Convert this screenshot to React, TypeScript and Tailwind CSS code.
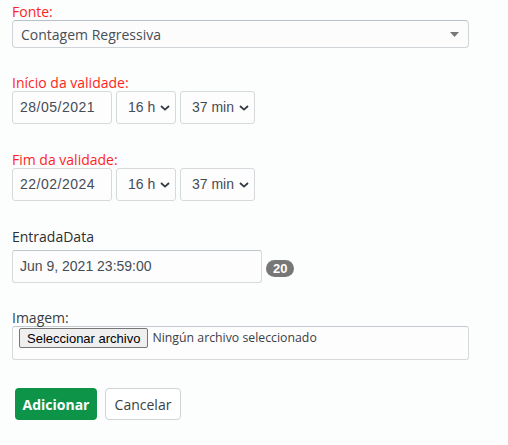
import React from "react";

const label = "block text-[14px] leading-[16px] text-[#ff1f1f] font-['Open_Sans',sans-serif]";
const box =
  "flex items-center h-[33px] border border-[#d6dadd] rounded-[3px] bg-[#fdfdfe] text-[14px] text-[#454c55] font-['Liberation_Sans',sans-serif]";

const Chevron = () => (
  <svg width="10" height="6" viewBox="0 0 10 6" className="ml-auto">
    <path d="M1 1 L5 4.6 L9 1" fill="none" stroke="#333a42" strokeWidth="1.8" />
  </svg>
);

const DateRow = ({ date }: { date: string }) => (
  <div className="flex gap-[4px]">
    <div className={`${box} w-[100px] pl-[7px] tracking-[0.5px]`}>{date}</div>
    <div className={`${box} w-[60px] pl-[11px] pr-[5px]`}>
      16 h
      <Chevron />
    </div>
    <div className={`${box} w-[75px] pl-[11px] pr-[5px]`}>
      37 min
      <Chevron />
    </div>
  </div>
);

const App = () => {
  return (
    <div className="w-[508px] h-[445px] bg-[#fcfdfd] pl-[12px] pt-[4px] font-['Open_Sans',sans-serif]">
      <label className={label}>Fonte:</label>
      <div className="w-[457px] h-[28px] flex items-center px-[8px] border border-[#cfd4d8] border-t-[#b9c1c6] rounded-[4px] bg-[#fdfcfd] text-[14px] text-[#474e57] font-['Open_Sans',sans-serif]">
        Contagem Regressiva
        <svg width="9" height="5" viewBox="0 0 9 5" className="ml-auto mr-[1px]">
          <path d="M0 0 H9 L4.5 5 Z" fill="#777" />
        </svg>
      </div>

      <label className={`${label} mt-[27px]`}>Início da validade:</label>
      <DateRow date="28/05/2021" />

      <label className={`${label} mt-[28px]`}>Fim da validade:</label>
      <DateRow date="22/02/2024" />

      <label className="block mt-[28px] text-[14px] leading-[16px] text-[#2b2f33]">EntradaData</label>
      <div className="mt-[5px] flex items-center gap-[4px]">
        <div className={`${box} w-[250px] pl-[7px] border-t-[#bfc5ca]`}>Jun 9, 2021 23:59:00</div>
        <span className="h-[17px] px-[7px] rounded-full bg-[#777] text-white text-[13px] leading-[17px] font-bold font-['Liberation_Sans',sans-serif] mt-[4px]">
          20
        </span>
      </div>

      <label className="block mt-[27px] text-[14px] leading-[16px] text-[#3a3f44]">Imagem:</label>
      <div className="w-[457px] h-[34px] border border-[#d6dadd] border-t-[#c3c9ce] rounded-[3px] bg-[#fdfdfe] pl-[6px] pt-[1px] flex items-start font-['Liberation_Sans',sans-serif]">
        <button className="h-[20px] px-[7px] border border-[#767676] rounded-[2px] bg-[#efefef] text-[13px] leading-[17px] text-black">
          Seleccionar archivo
        </button>
        <span className="ml-[4px] leading-[20px] text-[#3c4043] font-['Open_Sans',sans-serif] text-[12.3px]">
          Ningún archivo seleccionado
        </span>
      </div>

      <div className="mt-[28px] ml-[3px] flex gap-[8px] font-['Open_Sans',sans-serif]">
        <button className="h-[32px] w-[82px] rounded-[4px] bg-[#0d9448] text-white text-[14px] font-bold">
          Adicionar
        </button>
        <button className="h-[32px] w-[76px] rounded-[4px] border border-[#cfd3d6] bg-white text-[#3a3f44] text-[14px]">
          Cancelar
        </button>
      </div>
    </div>
  );
};

export default App;
